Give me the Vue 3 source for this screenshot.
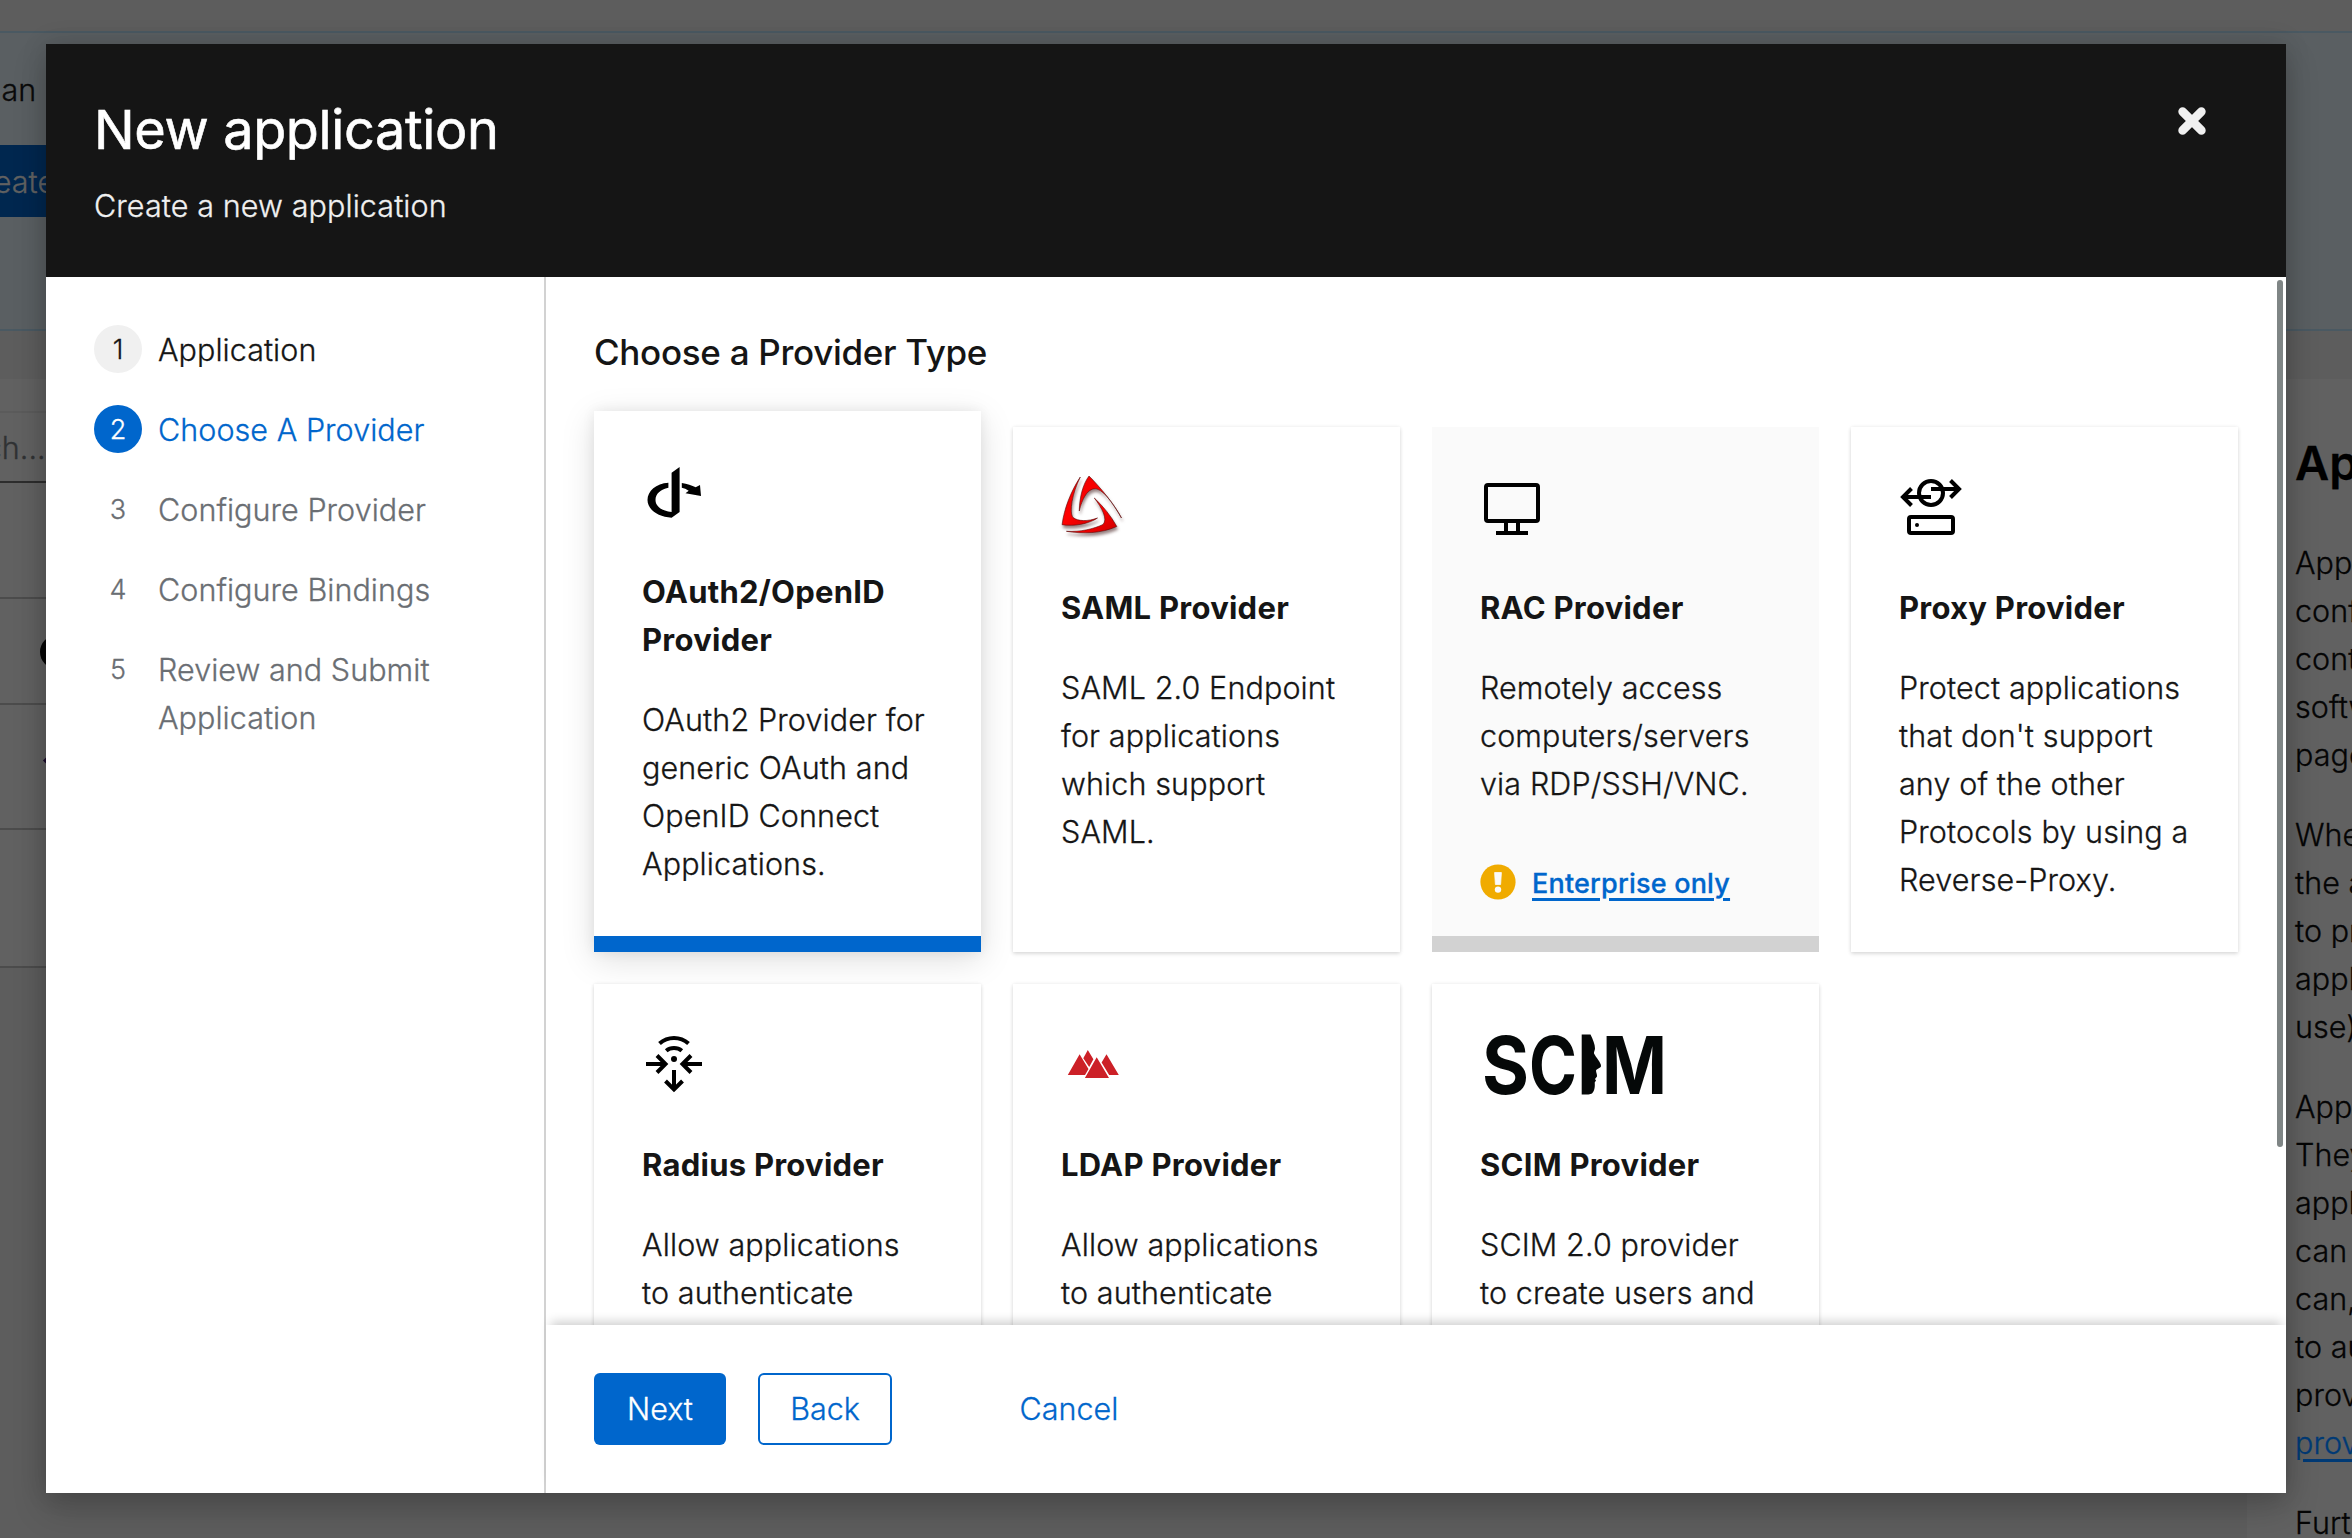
<script setup>
const steps = [
  { label: 'Application', state: 'done' },
  { label: 'Choose A Provider', state: 'current' },
  { label: 'Configure Provider', state: 'todo' },
  { label: 'Configure Bindings', state: 'todo' },
  { label: 'Review and Submit Application', state: 'todo' },
]

const providers = [
  { id: 'oidc', title: ['OAuth2/OpenID', 'Provider'], text: ['OAuth2 Provider for', 'generic OAuth and', 'OpenID Connect', 'Applications.'], selected: true },
  { id: 'saml', title: ['SAML Provider'], text: ['SAML 2.0 Endpoint', 'for applications', 'which support', 'SAML.'] },
  { id: 'rac', title: ['RAC Provider'], text: ['Remotely access', 'computers/servers', 'via RDP/SSH/VNC.'], enterprise: true },
  { id: 'proxy', title: ['Proxy Provider'], text: ['Protect applications', "that don't support", 'any of the other', 'Protocols by using a', 'Reverse-Proxy.'] },
  { id: 'radius', title: ['Radius Provider'], text: ['Allow applications', 'to authenticate'] },
  { id: 'ldap', title: ['LDAP Provider'], text: ['Allow applications', 'to authenticate'] },
  { id: 'scim', title: ['SCIM Provider'], text: ['SCIM 2.0 provider', 'to create users and'] },
]

const help = [
  ['Applications', 'configure', 'control', 'software', 'page.'],
  ['When', 'the appearance', 'to provide', 'application', 'use).'],
  ['Applications', 'They', 'applications', 'can be', 'can, however', 'to authentik', 'providers'],
]
</script>

<template>
  <div class="screen">
    <div class="page">
      <div class="topbar"></div>
      <div class="banner">
        <p class="banner-text"><span>can r</span></p>
        <div class="banner-btn"><span>Create</span></div>
      </div>
      <div class="columns">
        <div class="list">
          <div class="toolbar"></div>
          <div class="search"><span>Search...</span></div>
          <div class="row r1"></div>
          <div class="row r2"><i class="app-dot"></i></div>
          <div class="row r3"><i class="app-star"></i></div>
          <div class="row r4"></div>
        </div>
        <div class="help">
          <h2>Applications</h2>
          <p v-for="(para, i) in help" :key="i">
            <span v-for="(line, j) in para" :key="j">{{ line }}</span>
            <a v-if="i === 2">providers</a>
          </p>
          <p><span>Further</span></p>
        </div>
      </div>
    </div>

    <section class="modal">
      <header class="head">
        <div>
          <h1>New application</h1>
          <p>Create a new application</p>
        </div>
        <svg class="close" viewBox="0 0 28 28" width="28" height="28">
          <path d="M4.6 4.6 23.4 23.4M23.4 4.6 4.6 23.4" stroke="#f0f0f0" stroke-width="8.6" stroke-linecap="round" />
        </svg>
      </header>
      <div class="body">
        <nav class="nav">
          <div v-for="(s, i) in steps" :key="i" class="step" :class="s.state">
            <span class="num">{{ i + 1 }}</span>
            <span class="label">{{ s.label }}</span>
          </div>
        </nav>
        <div class="main">
          <div class="content">
            <h2>Choose a Provider Type</h2>
            <div class="grid">
              <article v-for="p in providers" :key="p.id" class="card" :class="{ selected: p.selected, locked: p.enterprise }">
                <div class="icon">
                  <svg v-if="p.id === 'oidc'" viewBox="0 0 64 64" width="64" height="64">
                    <path d="M29.6 13.7 37.6 8V53l-8 5.7zM26.4 23.7C14 24.5 5.5 32 5.5 41c0 9.500 10.500 17 24.100 17.700V53C20 52 13.500 47.500 13.500 41c0-6 5-11 12.900-12.300zM39.800 24c5.200.7 10.200 2.300 13.900 4.300L58 26l1 11-15.500-2.700 3.200-2.600c-2.200-1.700-4.700-2.500-6.900-3z" />
                  </svg>
                  <svg v-else-if="p.id === 'saml'" viewBox="0 0 64 64" width="64" height="64" class="saml">
                    <defs>
                      <linearGradient id="red" x1="0" y1="0" x2="1" y2="1">
                        <stop offset="0" stop-color="#e00" />
                        <stop offset=".5" stop-color="#f00" />
                        <stop offset="1" stop-color="#c00" />
                      </linearGradient>
                    </defs>
                    <g fill="url(#red)" stroke="#5c0808" stroke-width=".6">
                      <path d="M28 1C38 11 54 30 60.500 43 54 32 45 17 36 14 27 12 21 24 18.300 36 18.500 22 22 9 28 1z" />
                      <path d="M19.300 2C10 16 3 34 1.100 49.700 13 51.500 28 49 36.500 43 27 46.500 17 46.500 12 42.500 8 37 11 19 19.300 2z" />
                      <path d="M33.300 23C42 31 50 41 55.800 51.500 40 58.500 22 59 5.400 56.300 20 57 32 54 42 49.500 47 44 41 33 33.300 23z" />
                    </g>
                  </svg>
                  <svg v-else-if="p.id === 'rac'" viewBox="0 0 64 64" width="64" height="64">
                    <rect x="6" y="10" width="52" height="36" rx="2" fill="none" stroke="#000" stroke-width="4" />
                    <path d="M24 48h4v8h8v-8h4v8h8v4H16v-4h8z" />
                  </svg>
                  <svg v-else-if="p.id === 'proxy'" viewBox="0 0 64 64" width="64" height="64" fill="none" stroke="#000" stroke-width="4">
                    <circle cx="32" cy="18" r="12" />
                    <path d="M32 14h27M51.500 5.500 60 14l-8.500 8.500M32 22H5M12.500 13.500 4 22l8.500 8.500" />
                    <rect x="10" y="42" width="44" height="16" rx="2" />
                    <circle cx="18" cy="50" r="2" fill="#000" stroke="none" />
                  </svg>
                  <svg v-else-if="p.id === 'radius'" viewBox="0 0 64 64" width="64" height="64" fill="none" stroke="#000" stroke-width="4">
                    <path d="M17.500 11.600C21.500 8 26.500 6 32 6s10.500 2 14.500 5.600M24.200 18.800C26.300 17 29 16 32 16s5.700 1 7.800 2.800" />
                    <circle cx="32" cy="27" r="3" fill="#000" stroke="none" />
                    <path d="M4 32h20M15 23.500l8.500 8.500-8.500 8.500M60 32H40M49 23.500 40.500 32l8.500 8.500M32 38v19M23.500 49l8.500 8.500 8.500-8.500" />
                  </svg>
                  <svg v-else-if="p.id === 'ldap'" viewBox="0 0 64 64" width="64" height="64" fill="#cc2027">
                    <path d="M6.800 43 18.600 22.300 27.500 37 24 43zM26.800 18l5.600 9.300L28.200 35l-5.900-8.700zM35.700 25.300 48 46H23.900zM45.500 22.300 57.800 43H48.200l-7.600-12.500z" />
                  </svg>
                  <svg v-else viewBox="0 0 188 64" width="188" height="64" class="scim">
                    <text x="2" y="61.500" textLength="47" lengthAdjust="spacingAndGlyphs">S</text>
                    <text x="49" y="61.500" textLength="48" lengthAdjust="spacingAndGlyphs">C</text>
                    <path d="M101.700 2.500h8.800c2.500 5 4.500 10 4.500 14 0 2-1.300 3-1 5 2 4 7 9 7 12.500 0 2-4 2.500-5 4.500 0 2 1.300 4 1 6l-2 2.500 1 1.500-1.300 2c.3 3 .3 8-2.700 11-2 1-4 1-10.300 1z" />
                    <text x="122" y="61.500" textLength="65" lengthAdjust="spacingAndGlyphs">M</text>
                  </svg>
                </div>
                <h3><span v-for="t in p.title" :key="t">{{ t }}</span></h3>
                <p><span v-for="t in p.text" :key="t">{{ t }}</span></p>
                <div v-if="p.enterprise" class="ent">
                  <svg viewBox="0 0 36 36" width="36" height="36">
                    <circle cx="18" cy="18" r="17.600" fill="#f0ab00" />
                    <path d="M14.600 8.500h6.800l-.8 12h-5.200z" fill="#fafafa" stroke="#fafafa" stroke-width=".8" stroke-linejoin="round" />
                    <circle cx="18" cy="25.600" r="3.200" fill="#fafafa" />
                  </svg>
                  <a>Enterprise only</a>
                </div>
              </article>
            </div>
            <i class="scroll"></i>
          </div>
          <footer class="foot">
            <button class="btn primary">Next</button>
            <button class="btn secondary">Back</button>
            <button class="btn link">Cancel</button>
          </footer>
        </div>
      </div>
    </section>
  </div>
</template>

<style>
html, body { margin: 0; overflow: hidden; }
</style>

<style scoped>
.screen {
  position: relative;
  width: 2352px;
  height: 1538px;
  overflow: hidden;
  background: #5d5d5d;
  color: #151515;
  font: 300 30.5px/48px Inter, sans-serif;
  letter-spacing: .05px;
  -webkit-text-stroke: .3px currentColor;
}
h1, h2, h3, p { margin: 0; }
p span, h3 span { display: block; white-space: nowrap; }

/* dimmed page */
.page { display: flex; flex-direction: column; height: 100%; }
.topbar { flex: none; height: 31px; }
.banner {
  flex: none;
  box-sizing: border-box;
  height: 300px;
  border-top: 2px solid #4a5962;
  border-bottom: 2px solid #4a5962;
  background: #5a5f62;
  padding-top: 33px;
}
.banner-text { width: 60px; height: 48px; padding-bottom: 31px; color: #0a0a0a; }
.banner-text span { margin-left: -16px; }
.banner-btn { width: 100px; height: 72px; background: #00274f; color: #616161; line-height: 73px; }
.banner-btn span { display: block; margin-left: -39px; }
.columns { flex: 1; min-height: 0; display: flex; justify-content: space-between; padding-top: 48px; background: #5d5d5d; }
.list { flex: none; width: 1000px; height: 589px; background: #616161; color: #303234; }
.toolbar { height: 32px; border-bottom: 2px solid #5b5b5b; }
.search { height: 68px; border-bottom: 2px solid #2d2d2d; line-height: 70px; overflow: hidden; }
.search span { display: block; width: 150px; margin-left: -80px; }
.row { box-sizing: border-box; position: relative; border-bottom: 2px solid #4c4c4c; }
.r1 { height: 116px; }
.r2 { height: 106px; }
.r3 { height: 125px; }
.r4 { height: 138px; }
.app-dot { position: absolute; left: 40px; top: 36px; width: 34px; height: 34px; border-radius: 50%; background: #060606; }
.app-star { position: absolute; left: 44px; top: 53px; width: 5px; height: 5px; background: #1c0c2e; transform: rotate(45deg); }
.help { width: 57px; padding: 58px 0 0 48px; background: #616161; color: #050505; overflow: hidden; }
.help h2 { font: 600 47px/52px Inter, sans-serif; padding: 0 0 50px; color: #000; }
.help p { padding-bottom: 32px; }
.help a { color: #003a75; text-decoration: underline; text-decoration-thickness: 3px; text-underline-offset: 5px; }

/* dialog */
.modal {
  position: absolute;
  left: 46px;
  top: 44px;
  width: 2240px;
  height: 1449px;
  display: flex;
  flex-direction: column;
  background: #fff;
  box-shadow: 0 16px 32px rgba(3, 3, 3, .18), 0 0 24px rgba(3, 3, 3, .14);
}
.head {
  box-sizing: border-box;
  height: 233px;
  padding: 49px 80px 0 48px;
  display: flex;
  justify-content: space-between;
  background: #151515;
  color: #fff;
}
h1 { font: 400 54px/74px Inter, sans-serif; letter-spacing: -.35px; -webkit-text-stroke: .6px currentColor; }
.head p { margin-top: 15px; color: #f0f0f0; letter-spacing: .1px; }
.close { margin-top: 14px; }
.body { flex: 1; display: flex; min-height: 0; }
.nav {
  box-sizing: border-box;
  width: 500px;
  padding: 48px;
  border-right: 2px solid #d2d2d2;
  display: flex;
  flex-direction: column;
  gap: 32px;
}
.step { display: flex; gap: 16px; color: #6a6e73; }
.num { width: 48px; height: 48px; border-radius: 50%; text-align: center; font-size: 27px; line-height: 49px; flex: none; }
.label { width: 300px; padding-top: 1px; margin-bottom: -1px; }
.done { color: #151515; }
.done .num { background: #f0f0f0; }
.current { color: #06c; }
.current .num { background: #06c; color: #fff; }

.main { flex: 1; display: flex; flex-direction: column; min-width: 0; }
.content { position: relative; flex: 1; min-height: 0; overflow: hidden; padding: 48px 48px 0; }
.content h2 { font: 500 35px/54px Inter, sans-serif; letter-spacing: -.3px; padding-bottom: 48px; -webkit-text-stroke: 0; }
.grid { display: grid; grid-template-columns: repeat(4, 1fr); gap: 32px; grid-auto-rows: 525px; }
.card {
  box-sizing: border-box;
  padding: 48px 0 0 48px;
  background: #fff;
  box-shadow: 0 2px 4px rgba(3, 3, 3, .12), 0 0 4px rgba(3, 3, 3, .07);
}
.card.selected {
  height: 541px;
  margin-top: -16px;
  border-bottom: 16px solid #06c;
  box-shadow: 0 8px 32px rgba(3, 3, 3, .13), 0 0 12px rgba(3, 3, 3, .07);
}
.card.locked { background: #fafafa; border-bottom: 16px solid #d2d2d2; box-shadow: none; }
.card p { letter-spacing: .12px; }
.icon { height: 64px; margin-bottom: 45px; }
.icon svg { display: block; }
.saml { overflow: visible; filter: drop-shadow(1px 3px 1.5px rgba(50, 10, 10, .5)); }
.scim { fill: #050808; }
.scim text { font: 700 80px Inter, sans-serif; letter-spacing: 0; -webkit-text-stroke: 0; }
h3 { font: 700 31px/48px Inter, sans-serif; letter-spacing: .25px; margin-bottom: 32px; -webkit-text-stroke: 0; }
.ent { display: flex; gap: 16px; align-items: center; margin-top: 52px; height: 44px; }
.ent a {
  padding-top: 4px;
  font-size: 27px;
  font-weight: 500;
  color: #06c;
  letter-spacing: .2px;
  text-decoration: underline;
  text-decoration-thickness: 3px;
  text-underline-offset: 5px;
}
.scroll { position: absolute; right: 3px; top: 3px; width: 6px; height: 867px; border-radius: 3px; background: #7f8585; }

.foot {
  position: relative;
  box-sizing: border-box;
  height: 168px;
  padding: 48px;
  display: flex;
  background: #fff;
  box-shadow: 0 -8px 10px -5px rgba(3, 3, 3, .2);
}
.btn { box-sizing: border-box; height: 72px; padding: 0; border: 0; border-radius: 6px; background: none; font: inherit; color: #06c; }
.primary { width: 132px; background: #06c; color: #fff; }
.secondary { width: 134px; margin-left: 32px; border: 2px solid #06c; }
.link { width: 162px; margin-left: 96px; }
</style>
